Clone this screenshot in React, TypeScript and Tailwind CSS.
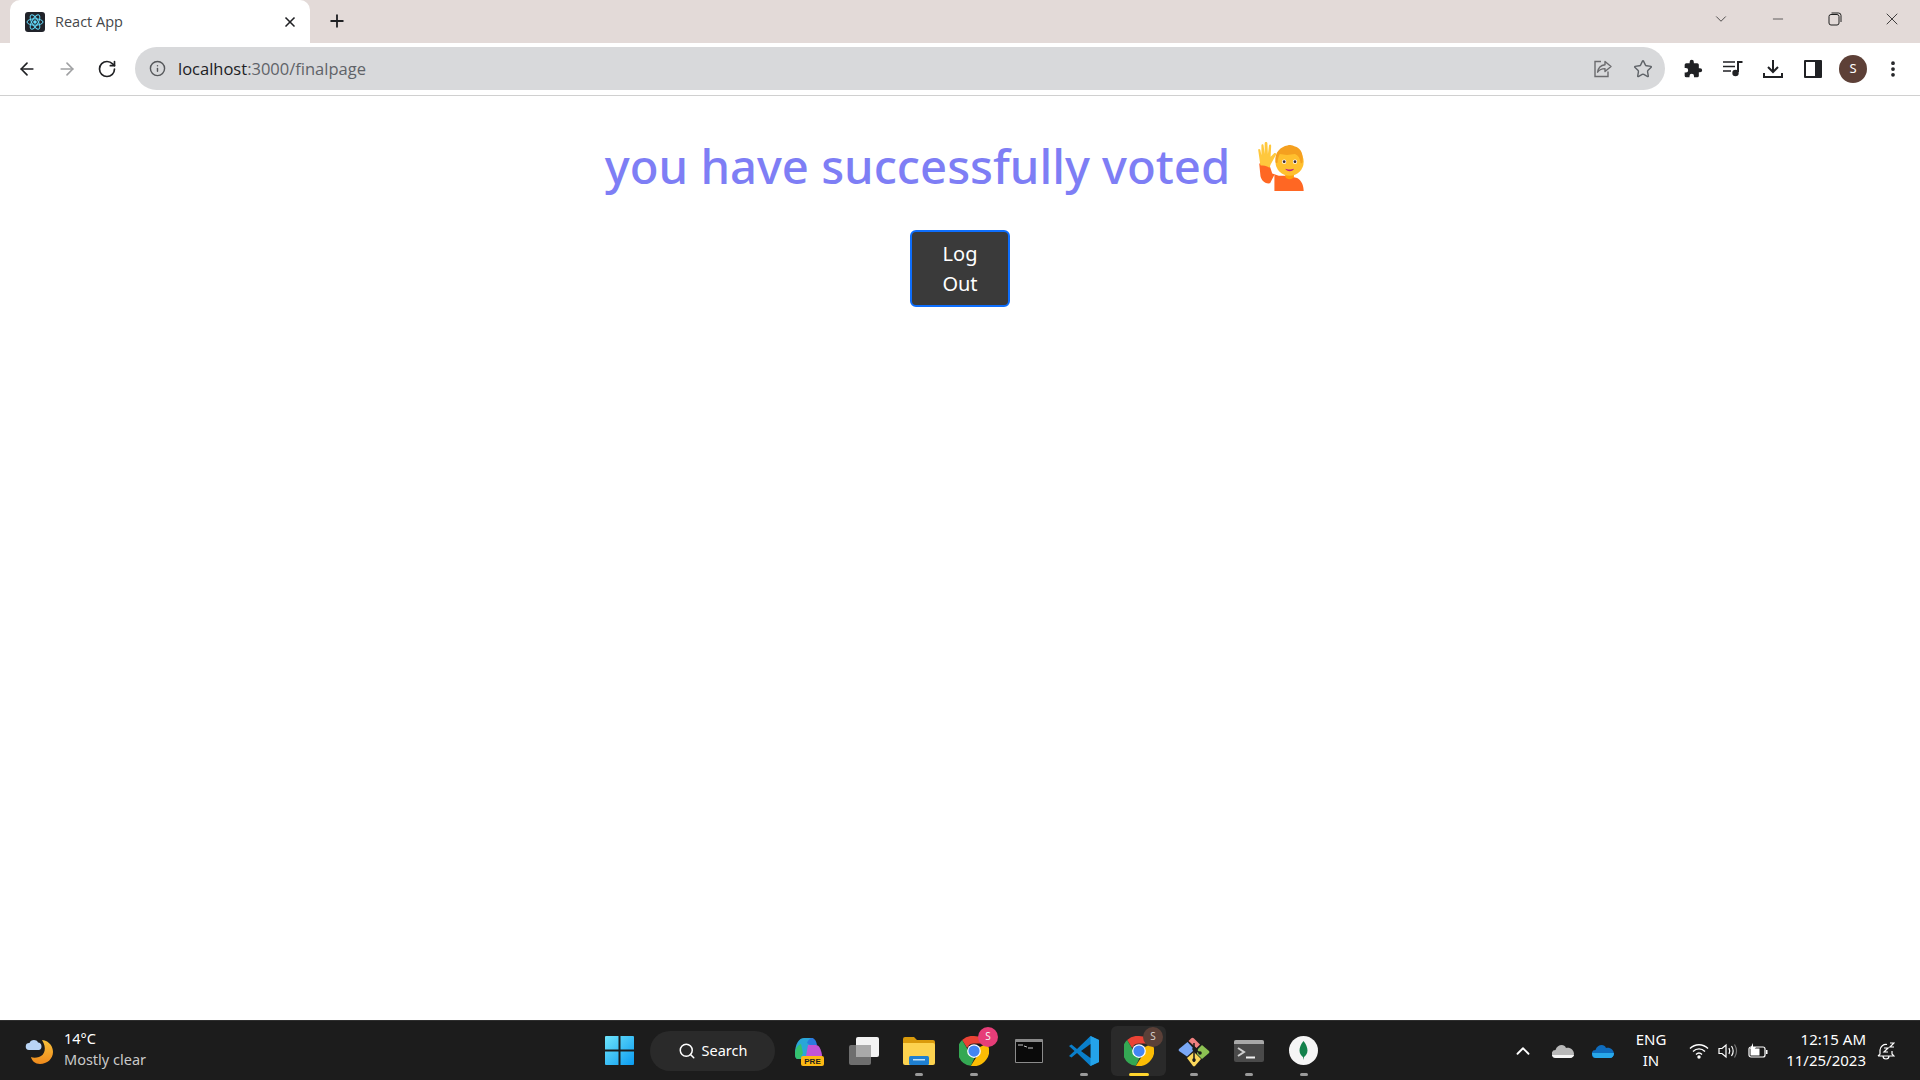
import { ArrowLeft, ArrowRight, RotateCw, Info, Star, Plus, X, ChevronDown, ChevronUp, Minus, Search, EllipsisVertical } from "lucide-react";

function ReactFavicon() {
  return (
    <svg width="20" height="20" viewBox="0 0 20 20" fill="none" className="rounded-[3px] bg-[#20232a]">
      <circle cx="10" cy="10" r="1.8" fill="#61dafb" />
      <g stroke="#61dafb" strokeWidth="1">
        <ellipse cx="10" cy="10" rx="8" ry="3.2" />
        <ellipse cx="10" cy="10" rx="8" ry="3.2" transform="rotate(60 10 10)" />
        <ellipse cx="10" cy="10" rx="8" ry="3.2" transform="rotate(120 10 10)" />
      </g>
    </svg>
  );
}

function RestoreIcon() {
  return (
    <svg width="14" height="14" viewBox="0 0 14 14" fill="none" stroke="#1f1f1f" strokeWidth="1">
      <rect x="1" y="2.5" width="10" height="10.5" rx="2" />
      <path d="M3.5 1h7A2.5 2.5 0 0 1 13 3.5V10" />
    </svg>
  );
}

function ShareIcon() {
  return (
    <svg width="20" height="20" viewBox="0 0 20 20" fill="none" stroke="#6b6b6e" strokeWidth="1.4">
      <path d="M8 2.5H2v15h13v-5" />
      <path d="M12 2.5l6 5-6 5V9.6c-3.4 0-5.6 1-7.4 3.6.5-4 3-7 7.4-7.5z" strokeLinejoin="round" />
    </svg>
  );
}

function ExtensionIcon() {
  return (
    <svg width="20" height="20" viewBox="0 0 24 24" fill="#202124">
      <path d="M20.5 11H19V7a2 2 0 0 0-2-2h-4V3.5a2.5 2.5 0 0 0-5 0V5H4a2 2 0 0 0-2 2v3.8h1.5a2.7 2.7 0 0 1 0 5.4H2V20a2 2 0 0 0 2 2h3.8v-1.5a2.7 2.7 0 0 1 5.4 0V22H17a2 2 0 0 0 2-2v-4h1.5a2.5 2.5 0 0 0 0-5z" />
    </svg>
  );
}

function MediaIcon() {
  return (
    <svg width="20" height="18" viewBox="0 0 20 18" fill="none">
      <path d="M0 2h12M0 6.5h12M0 11h8" stroke="#202124" strokeWidth="1.6" />
      <path d="M15 2h4.5" stroke="#202124" strokeWidth="2" />
      <path d="M15 1v11" stroke="#202124" strokeWidth="2" />
      <circle cx="12.5" cy="13" r="3.2" fill="#202124" />
    </svg>
  );
}

function DownloadIcon() {
  return (
    <svg width="20" height="20" viewBox="0 0 20 20" fill="none" stroke="#202124" strokeWidth="2">
      <path d="M10 1v11M5 8l5 5 5-5" />
      <path d="M1 14v4h18v-4" />
    </svg>
  );
}

function SidePanelIcon() {
  return (
    <svg width="18" height="18" viewBox="0 0 18 18">
      <rect width="18" height="18" rx="1" fill="#202124" />
      <rect x="2" y="2" width="9" height="14" fill="#fff" />
    </svg>
  );
}

function RaisedHand() {
  return (
    <svg width="52" height="52" viewBox="0 0 48 48">
      <path d="M3 22c1-1 7-2 9 0l3 9 6 2 8 0 9 2c4 2 6 7 6 12H17V32L13 40c-5 1-9-4-9-8z" fill="#ff6723" />
      <path d="M4 23l-2-14c0-1 1.500-1 2 0l1 5 0-9c0-1.500 2-1.500 2 0l1 8 0-10c0-1.500 2.500-1.500 2.500 0l.5 10 1-8c.3-1.500 2.200-1 2 .5l-.5 10 3-3c1-1 2.500 0 2 1l-5 9-1 3c-3-2-6-2-8-2z" fill="#ffc83d" />
      <path d="M27 31h8v3c-1 3-7 3-8 0z" fill="#ff9f0a" />
      <circle cx="31" cy="20" r="13" fill="#ffc02e" />
      <path d="M18 20c-1-9 5-14 11-15 3-1 5 0 7 1 4 1 8 5 7 14-.5 2-2 2-2 0-.5-3-2-6-5-7-5 1-10 1-14 0-1 2-2 5-2 7 0 1.500-2 1.500-2 0z" fill="#f5a01f" />
      <circle cx="26" cy="20" r="2" fill="#fff" />
      <circle cx="36" cy="20" r="2" fill="#fff" />
      <circle cx="26" cy="20" r="1.300" fill="#402a32" />
      <circle cx="36" cy="20" r="1.300" fill="#402a32" />
      <path d="M27 26.500c2 1 6 1 8 0-.5 3-7 3-8 0z" fill="#bb1d80" />
    </svg>
  );
}

function WeatherIcon() {
  return (
    <svg width="30" height="30" viewBox="0 0 30 30">
      <defs>
        <linearGradient id="moon" x1="0" y1="0" x2="0" y2="1">
          <stop offset="0" stopColor="#f8c13a" />
          <stop offset="1" stopColor="#f08a1c" />
        </linearGradient>
      </defs>
      <path d="M18 4c8 1 11 7 11 12 0 7-6 12-13 12-5 0-8-3-9-7 2 1 5 1 8 0 6-2 8-9 3-17z" fill="url(#moon)" />
      <path d="M5 14a3.500 3.500 0 0 1 .5-7c1-3.500 7-4 8.500-.5 4 0 5 6.500 1 7.500z" fill="#b9d4f5" />
    </svg>
  );
}

function WindowsLogo() {
  return (
    <svg width="29" height="29" viewBox="0 0 29 29">
      <defs>
        <linearGradient id="win" x1="0" y1="0" x2="1" y2="1">
          <stop offset="0" stopColor="#6fe4fb" />
          <stop offset="1" stopColor="#0a9bf0" />
        </linearGradient>
      </defs>
      <path d="M1 0h12.500v13.500H0V1a1 1 0 0 1 1-1zM15.500 0H28a1 1 0 0 1 1 1v12.500H15.500zM0 15.500h13.500V29H1a1 1 0 0 1-1-1zM15.500 15.500H29V28a1 1 0 0 1-1 1H15.500z" fill="url(#win)" />
    </svg>
  );
}

function CopilotIcon() {
  return (
    <svg width="30" height="30" viewBox="0 0 30 30">
      <path d="M1 18C1 8 5 2 10 2h9l-5 15c-1 4-4 6-7 6H4c-2 0-3-2-3-5z" fill="#2aa6d8" />
      <path d="M1 18c0-6 3-9 6-10l2 9-3 6H4c-2 0-3-2-3-5z" fill="#35c26f" />
      <path d="M14 9h8c3 0 5 4 6 10 0 2-1 4-3 4h-9c-2 0-4-1-4-3z" fill="#c154d6" />
      <path d="M18 2c2 0 4 2 5 7h-7l-3-2c1-3 3-5 5-5z" fill="#2b7ae0" />
      <rect x="7" y="20" width="23" height="10" rx="2" fill="#fdb913" />
      <text x="18.500" y="28" textAnchor="middle" fontSize="8" fontWeight="800" fill="#1c1c1c" fontFamily="'Liberation Sans', sans-serif">PRE</text>
    </svg>
  );
}

function TaskViewIcon() {
  return (
    <svg width="30" height="28" viewBox="0 0 30 28">
      <rect x="0" y="8" width="22" height="20" rx="2" fill="#6e6e6e" />
      <rect x="7" y="0" width="23" height="20" rx="2" fill="#f2f2f2" />
      <rect x="7" y="8" width="15" height="12" fill="#a9a9a9" />
    </svg>
  );
}

function ExplorerIcon() {
  return (
    <svg width="32" height="28" viewBox="0 0 32 28">
      <path d="M0 2a2 2 0 0 1 2-2h9l3 3h16a2 2 0 0 1 2 2v4H0z" fill="#d99a0b" />
      <path d="M0 6h30a2 2 0 0 1 2 2v18a2 2 0 0 1-2 2H2a2 2 0 0 1-2-2z" fill="#fcd24f" />
      <rect x="6" y="19" width="20" height="9" rx="1.500" fill="#1f7fd0" />
      <rect x="10" y="22" width="12" height="1.500" fill="#bfe0f7" />
    </svg>
  );
}

function ChromeIcon({ id }: { id: string }) {
  return (
    <svg width="30" height="30" viewBox="0 0 48 48" data-name={id}>
      <path d="M24 0a24 24 0 0 1 20.800 12H24a12 12 0 0 0-11 7L5 6.500A24 24 0 0 1 24 0z" fill="#ea4335" />
      <path d="M5 6.500L15.500 24.500a10 10 0 0 0 10 9L19 47.500A24 24 0 0 1 5 6.500z" fill="#34a853" />
      <path d="M44.800 12A24 24 0 0 1 19 47.500l9-14a10 10 0 0 0 4-15z" fill="#fbbc04" />
      <circle cx="24" cy="24" r="11" fill="#fff" />
      <circle cx="24" cy="24" r="9" fill="#4285f4" />
    </svg>
  );
}

function CmdIcon() {
  return (
    <svg width="28" height="24" viewBox="0 0 28 24">
      <rect width="28" height="24" rx="1" fill="#8b8b8b" />
      <rect x="1" y="3" width="26" height="20" fill="#0a0a0a" />
      <path d="M3 6h5M9 7l3 1M13 9h5" stroke="#c8c8c8" strokeWidth="1" />
    </svg>
  );
}

function VscodeIcon() {
  return (
    <svg width="30" height="30" viewBox="0 0 30 30">
      <path d="M21.500 0L30 4v22l-8.500 4L8 17l-5.500 4.500L0 20l5.500-5L0 10l2.500-1.500L8 13z" fill="#0a7fcb" />
      <path d="M21.500 0L30 4v22l-8.500 4z" fill="#24a3ea" />
      <path d="M21.500 8L12 15l9.500 7z" fill="#1c1c1c" />
    </svg>
  );
}

function GitIcon() {
  return (
    <svg width="32" height="32" viewBox="0 0 32 32">
      <path d="M13 3.500a2 2 0 0 1 3 0l6 6-3.500 3.500-8-7z" fill="#f08080" />
      <path d="M9.500 7L16 14l-1 2-6 5.500L1 16a1.500 1.500 0 0 1 0-2z" fill="#7aa7f5" />
      <path d="M20 14l4-4 7 6a1.500 1.500 0 0 1 0 2l-7 6-5-5z" fill="#8cc152" />
      <path d="M9 23l7-6 7 7-6 7a1.500 1.500 0 0 1-2 0z" fill="#fbd75b" />
      <path d="M16 8v19M16 14l6 4" stroke="#1c1c1c" strokeWidth="1.500" />
      <circle cx="16" cy="14" r="1.800" fill="#1c1c1c" />
      <circle cx="22" cy="18" r="1.800" fill="#1c1c1c" />
      <circle cx="16" cy="25" r="1.800" fill="#1c1c1c" />
    </svg>
  );
}

function TerminalIcon() {
  return (
    <svg width="30" height="22" viewBox="0 0 30 22">
      <rect width="30" height="22" rx="2" fill="#4a4a4a" />
      <path d="M0 2a2 2 0 0 1 2-2h26a2 2 0 0 1 2 2v2H0z" fill="#a8a8a8" />
      <path d="M4 8l6 4-6 4" fill="none" stroke="#cfcfcf" strokeWidth="2" />
      <path d="M12 17.500h9" stroke="#f0f0f0" strokeWidth="2" />
    </svg>
  );
}

function MongoIcon() {
  return (
    <svg width="29" height="29" viewBox="0 0 29 29">
      <circle cx="14.500" cy="14.500" r="14.500" fill="#f5f5f5" />
      <path d="M14.500 5c2.500 3 4 6.500 4 9.500 0 3-2 5.500-3.500 6.500l-.5 3-.5-3c-1.500-1-3.500-3.500-3.500-6.500 0-3 1.500-6.500 4-9.500z" fill="#13814b" />
    </svg>
  );
}

function AppSlot({ children, badge, active, dot }: { children: React.ReactNode; badge?: string; active?: boolean; dot?: boolean }) {
  return (
    <div className={`relative flex h-[50px] w-[55px] items-center justify-center ${active ? "rounded-md bg-[#2a2a2a]" : ""}`}>
      {children}
      {badge && (
        <span
          className={`absolute top-[1px] right-[3px] flex h-[20px] w-[20px] items-center justify-center rounded-full text-[10px] ${
            active ? "bg-[#5b4038] text-[#d8d0cc]" : "bg-[#e63d78] text-[#f5f5f5]"
          }`}
        >
          {badge}
        </span>
      )}
      {dot && !active && <span className="absolute bottom-0 h-[3px] w-[8px] rounded-full bg-[#9a9a9a]" />}
      {active && <span className="absolute bottom-0 h-[3px] w-[20px] rounded-full bg-[#ffd52e]" />}
    </div>
  );
}

export default function App() {
  return (
    <div className="flex h-[1080px] w-[1920px] flex-col overflow-hidden bg-white font-['Noto_Sans',sans-serif]">
      {/* tab strip */}
      <div className="flex h-[43px] items-end bg-[#e3dad8] pl-[10px]">
        <div className="flex h-[43px] w-[300px] items-center rounded-t-[10px] bg-white pl-[15px] pr-[12px]">
          <ReactFavicon />
          <span className="ml-[10px] flex-1 font-['Open_Sans',sans-serif] text-[14.5px] text-[#45474a]">React App</span>
          <X size={16} strokeWidth={2.5} color="#202124" />
        </div>
        <div className="ml-[17px] flex h-[41px] items-center self-start">
          <Plus size={20} strokeWidth={2.2} color="#202124" />
        </div>
        <div className="ml-auto flex h-[38px] items-center self-start">
          <div className="flex w-[57px] justify-center"><ChevronDown size={18} strokeWidth={1} color="#1f1f1f" /></div>
          <div className="flex w-[57px] justify-center"><Minus size={16} strokeWidth={1} color="#1f1f1f" /></div>
          <div className="flex w-[57px] justify-center"><RestoreIcon /></div>
          <div className="flex w-[57px] justify-center"><X size={20} strokeWidth={1} color="#1f1f1f" /></div>
        </div>
      </div>

      {/* toolbar */}
      <div className="flex h-[53px] items-center border-b border-[#d0d0d0] bg-white pb-[1px]">
        <div className="flex w-[135px] items-center pl-[17px]">
          <ArrowLeft size={20} strokeWidth={2} color="#202124" />
          <ArrowRight size={20} strokeWidth={2} color="#a0a1a3" className="ml-[20px]" />
          <RotateCw size={20} strokeWidth={2} color="#202124" className="ml-[20px]" />
        </div>
        <div className="flex h-[43px] w-[1530px] items-center rounded-full bg-[#d8d9db] pl-[14px] pr-[12px]">
          <Info size={17} strokeWidth={2} color="#55575a" />
          <span className="ml-[12px] flex-1 pt-[1px] font-['Open_Sans',sans-serif] text-[16.5px] text-[#202124]">
            localhost<span className="text-[#5f6368]">:3000/finalpage</span>
          </span>
          <ShareIcon />
          <Star size={20} strokeWidth={1.7} color="#5f6368" className="ml-[20px]" />
        </div>
        <div className="flex flex-1 items-center pl-[8px]">
          <div className="flex w-[40px] justify-center"><ExtensionIcon /></div>
          <div className="flex w-[40px] justify-center"><MediaIcon /></div>
          <div className="flex w-[40px] justify-center"><DownloadIcon /></div>
          <div className="flex w-[40px] justify-center"><SidePanelIcon /></div>
          <div className="ml-[6px] flex h-[28px] w-[28px] items-center justify-center rounded-full bg-[#5d4037] text-[13px] text-white">S</div>
          <EllipsisVertical size={20} strokeWidth={2.5} color="#202124" className="ml-[16px]" />
        </div>
      </div>

      {/* page */}
      <main className="flex flex-1 flex-col items-center">
        <div className="mr-[7px] mt-[34px] flex h-[72px] items-center">
          <h1 className="text-[47.2px] font-medium leading-[72px] text-[#7e7ef5]">you have successfully voted</h1>
          <span className="ml-[26px]"><RaisedHand /></span>
        </div>
        <button className="mt-[28px] h-[77px] w-[100px] rounded-md border-2 border-[#0d6efd] bg-[#3a3a3a] px-[24px] text-[20px] leading-[30px] text-white">
          Log Out
        </button>
      </main>

      {/* taskbar */}
      <div className="flex h-[60px] items-center border-t border-[#2e2e2e] bg-[#1c1c1c] text-white">
        <div className="flex w-[588px] items-center pl-[24px]">
          <WeatherIcon />
          <div className="ml-[10px] pb-[4px] text-[14.5px] leading-[21px]">
            <div>14°C</div>
            <div className="text-[#c9c9c9]">Mostly clear</div>
          </div>
        </div>
        <div className="flex items-center">
          <div className="flex w-[62px] justify-center"><WindowsLogo /></div>
          <div className="mr-[6px] flex h-[40px] w-[125px] items-center justify-center rounded-full bg-[#2a2a2a] text-[14.5px]">
            <Search size={18} strokeWidth={2} className="mr-[6px]" />
            Search
          </div>
          <AppSlot><CopilotIcon /></AppSlot>
          <AppSlot><TaskViewIcon /></AppSlot>
          <AppSlot dot><ExplorerIcon /></AppSlot>
          <AppSlot dot badge="S"><ChromeIcon id="chrome-a" /></AppSlot>
          <AppSlot><CmdIcon /></AppSlot>
          <AppSlot dot><VscodeIcon /></AppSlot>
          <AppSlot active badge="S"><ChromeIcon id="chrome-b" /></AppSlot>
          <AppSlot dot><GitIcon /></AppSlot>
          <AppSlot dot><TerminalIcon /></AppSlot>
          <AppSlot dot><MongoIcon /></AppSlot>
        </div>
        <div className="ml-auto flex items-center pr-[25px]">
          <ChevronUp size={22} strokeWidth={2} />
          <svg width="22" height="14" viewBox="0 0 22 14" className="ml-[18px]">
            <path d="M4 14a4 4 0 0 1-.5-8C5 1 12-1 14 4c4-1 8 2 8 6 0 2-2 4-4 4z" fill="#b8b8b8" />
            <path d="M4 14c-2 0-4-2-4-3h22c0 1-2 3-4 3z" fill="#f5f5f5" />
          </svg>
          <svg width="22" height="14" viewBox="0 0 22 14" className="ml-[18px]">
            <path d="M4 14a4 4 0 0 1-.5-8C5 1 12-1 14 4c4-1 8 2 8 6 0 2-2 4-4 4z" fill="#0f6cbd" />
            <path d="M4 14c-2 0-4-2-4-5h22c0 3-2 5-4 5z" fill="#28a8ea" />
          </svg>
          <div className="ml-[7px] w-[60px] pb-[2px] text-center text-[15px] leading-[21px]">
            <div>ENG</div>
            <div>IN</div>
          </div>
          <svg width="20" height="16" viewBox="0 0 20 16" fill="none" stroke="#fff" strokeWidth="1.400" className="ml-[8px]">
            <path d="M1 5.500c5-5 13-5 18 0M4 8.500c3.500-3.500 8.500-3.500 12 0M7 11.500c2-2 4-2 6 0" />
            <circle cx="10" cy="14" r="1" fill="#fff" />
          </svg>
          <svg width="20" height="16" viewBox="0 0 20 16" fill="none" stroke="#fff" strokeWidth="1.200" className="ml-[9px]">
            <path d="M1 5.500h3l4-3.500v12l-4-3.500H1z" />
            <path d="M11 5c1 2 1 4 0 6M13.500 3c2 3 2 7 0 10" />
            <path d="M16.500 1.500c2.500 4 2.500 9 0 13" stroke="#777" />
          </svg>
          <svg width="20" height="16" viewBox="0 0 20 16" className="ml-[10px]">
            <rect x="1" y="4" width="16" height="10" rx="2" fill="none" stroke="#fff" strokeWidth="1.200" />
            <rect x="2.500" y="5.500" width="9" height="7" fill="#fff" />
            <rect x="18" y="7" width="1.500" height="4" fill="#fff" />
            <path d="M5 0L2 6h3l-1 4 4-6H5z" fill="#fff" />
          </svg>
          <div className="ml-[8px] w-[90px] pb-[2px] text-right text-[15px] leading-[21px]">
            <div>12:15 AM</div>
            <div>11/25/2023</div>
          </div>
          <svg width="18" height="20" viewBox="0 0 18 20" fill="none" stroke="#fff" strokeWidth="1.200" className="ml-[11px]">
            <path d="M3 13V9a6 6 0 0 1 7-5.500M1 15c1-1 2-1.500 2-2M15 10v3l2 2H1M6 15c0 4 6 4 6 0" />
            <path d="M7 7h4l-4 4h4M13 2h4l-4 4h4" />
          </svg>
        </div>
      </div>
    </div>
  );
}
